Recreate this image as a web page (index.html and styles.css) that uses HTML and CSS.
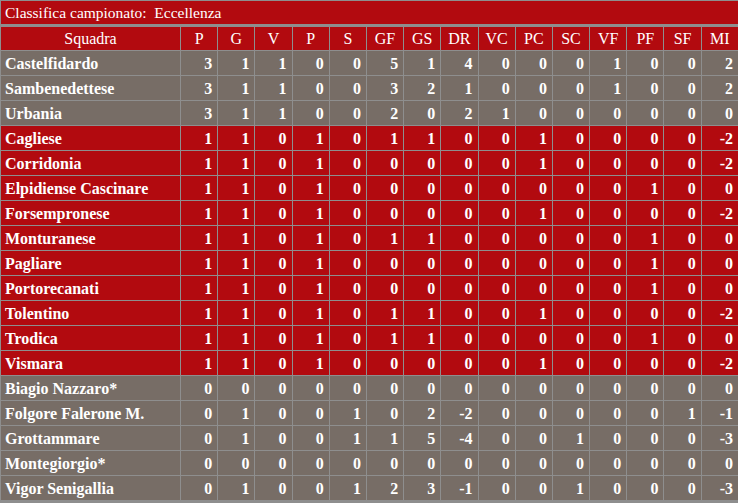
FILE: index.html
```html
<!DOCTYPE html>
<html lang="it">
<head>
<meta charset="utf-8">
<title>Classifica campionato: Eccellenza</title>
<link rel="stylesheet" href="styles.css">
</head>
<body>
<div class="board">
  <div class="title">Classifica campionato:&nbsp; Eccellenza</div>
  <table class="standings">
    <colgroup><col class="c-team"><col span="15"></colgroup>
    <thead>
      <tr><th>Squadra</th><th>P</th><th>G</th><th>V</th><th>P</th><th>S</th><th>GF</th><th>GS</th><th>DR</th><th>VC</th><th>PC</th><th>SC</th><th>VF</th><th>PF</th><th>SF</th><th>MI</th></tr>
    </thead>
    <tbody>
      <tr class="grey"><td>Castelfidardo</td><td>3</td><td>1</td><td>1</td><td>0</td><td>0</td><td>5</td><td>1</td><td>4</td><td>0</td><td>0</td><td>0</td><td>1</td><td>0</td><td>0</td><td>2</td></tr>
      <tr class="grey"><td>Sambenedettese</td><td>3</td><td>1</td><td>1</td><td>0</td><td>0</td><td>3</td><td>2</td><td>1</td><td>0</td><td>0</td><td>0</td><td>1</td><td>0</td><td>0</td><td>2</td></tr>
      <tr class="grey"><td>Urbania</td><td>3</td><td>1</td><td>1</td><td>0</td><td>0</td><td>2</td><td>0</td><td>2</td><td>1</td><td>0</td><td>0</td><td>0</td><td>0</td><td>0</td><td>0</td></tr>
      <tr class="red"><td>Cagliese</td><td>1</td><td>1</td><td>0</td><td>1</td><td>0</td><td>1</td><td>1</td><td>0</td><td>0</td><td>1</td><td>0</td><td>0</td><td>0</td><td>0</td><td>-2</td></tr>
      <tr class="red"><td>Corridonia</td><td>1</td><td>1</td><td>0</td><td>1</td><td>0</td><td>0</td><td>0</td><td>0</td><td>0</td><td>1</td><td>0</td><td>0</td><td>0</td><td>0</td><td>-2</td></tr>
      <tr class="red"><td>Elpidiense Cascinare</td><td>1</td><td>1</td><td>0</td><td>1</td><td>0</td><td>0</td><td>0</td><td>0</td><td>0</td><td>0</td><td>0</td><td>0</td><td>1</td><td>0</td><td>0</td></tr>
      <tr class="red"><td>Forsempronese</td><td>1</td><td>1</td><td>0</td><td>1</td><td>0</td><td>0</td><td>0</td><td>0</td><td>0</td><td>1</td><td>0</td><td>0</td><td>0</td><td>0</td><td>-2</td></tr>
      <tr class="red"><td>Monturanese</td><td>1</td><td>1</td><td>0</td><td>1</td><td>0</td><td>1</td><td>1</td><td>0</td><td>0</td><td>0</td><td>0</td><td>0</td><td>1</td><td>0</td><td>0</td></tr>
      <tr class="red"><td>Pagliare</td><td>1</td><td>1</td><td>0</td><td>1</td><td>0</td><td>0</td><td>0</td><td>0</td><td>0</td><td>0</td><td>0</td><td>0</td><td>1</td><td>0</td><td>0</td></tr>
      <tr class="red"><td>Portorecanati</td><td>1</td><td>1</td><td>0</td><td>1</td><td>0</td><td>0</td><td>0</td><td>0</td><td>0</td><td>0</td><td>0</td><td>0</td><td>1</td><td>0</td><td>0</td></tr>
      <tr class="red"><td>Tolentino</td><td>1</td><td>1</td><td>0</td><td>1</td><td>0</td><td>1</td><td>1</td><td>0</td><td>0</td><td>1</td><td>0</td><td>0</td><td>0</td><td>0</td><td>-2</td></tr>
      <tr class="red"><td>Trodica</td><td>1</td><td>1</td><td>0</td><td>1</td><td>0</td><td>1</td><td>1</td><td>0</td><td>0</td><td>0</td><td>0</td><td>0</td><td>1</td><td>0</td><td>0</td></tr>
      <tr class="red"><td>Vismara</td><td>1</td><td>1</td><td>0</td><td>1</td><td>0</td><td>0</td><td>0</td><td>0</td><td>0</td><td>1</td><td>0</td><td>0</td><td>0</td><td>0</td><td>-2</td></tr>
      <tr class="grey"><td>Biagio Nazzaro*</td><td>0</td><td>0</td><td>0</td><td>0</td><td>0</td><td>0</td><td>0</td><td>0</td><td>0</td><td>0</td><td>0</td><td>0</td><td>0</td><td>0</td><td>0</td></tr>
      <tr class="grey"><td>Folgore Falerone M.</td><td>0</td><td>1</td><td>0</td><td>0</td><td>1</td><td>0</td><td>2</td><td>-2</td><td>0</td><td>0</td><td>0</td><td>0</td><td>0</td><td>1</td><td>-1</td></tr>
      <tr class="grey"><td>Grottammare</td><td>0</td><td>1</td><td>0</td><td>0</td><td>1</td><td>1</td><td>5</td><td>-4</td><td>0</td><td>0</td><td>1</td><td>0</td><td>0</td><td>0</td><td>-3</td></tr>
      <tr class="grey"><td>Montegiorgio*</td><td>0</td><td>0</td><td>0</td><td>0</td><td>0</td><td>0</td><td>0</td><td>0</td><td>0</td><td>0</td><td>0</td><td>0</td><td>0</td><td>0</td><td>0</td></tr>
      <tr class="grey"><td>Vigor Senigallia</td><td>0</td><td>1</td><td>0</td><td>0</td><td>1</td><td>2</td><td>3</td><td>-1</td><td>0</td><td>0</td><td>1</td><td>0</td><td>0</td><td>0</td><td>-3</td></tr>
    </tbody>
  </table>
</div>
</body>
</html>
```

FILE: styles.css
```css
html, body {
  margin: 0;
  padding: 0;
  background: #8e8e8e;
  overflow: hidden;
}

body {
  font-family: "Liberation Serif", "Times New Roman", serif;
  color: #ffffff;
}

.board {
  width: 739px;
  background: #8e8e8e;
  padding-top: 1px;
}

.title {
  margin-left: 1px;
  height: 23px;
  line-height: 23px;
  background: #b20a0f;
  font-size: 15.5px;
  padding-left: 4px;
  margin-bottom: 2px;
}

.standings {
  width: 739px;
  table-layout: fixed;
  border-collapse: separate;
  border-spacing: 1px;
  background: #8e8e8e;
  font-size: 16px;
}

.c-team {
  width: 179px;
}

.standings th {
  height: 23px;
  padding: 0;
  background: #b20a0f;
  font-weight: normal;
  text-align: center;
}

.standings td {
  box-sizing: border-box;
  height: 24px;
  padding: 2px 5px 0 0;
  font-weight: bold;
  text-align: right;
}

.standings td:first-child {
  padding: 2px 0 0 4px;
  text-align: left;
  white-space: nowrap;
}

.standings tr.grey td {
  background: #776d66;
}

.standings tr.red td {
  background: #b20a0f;
}
```
